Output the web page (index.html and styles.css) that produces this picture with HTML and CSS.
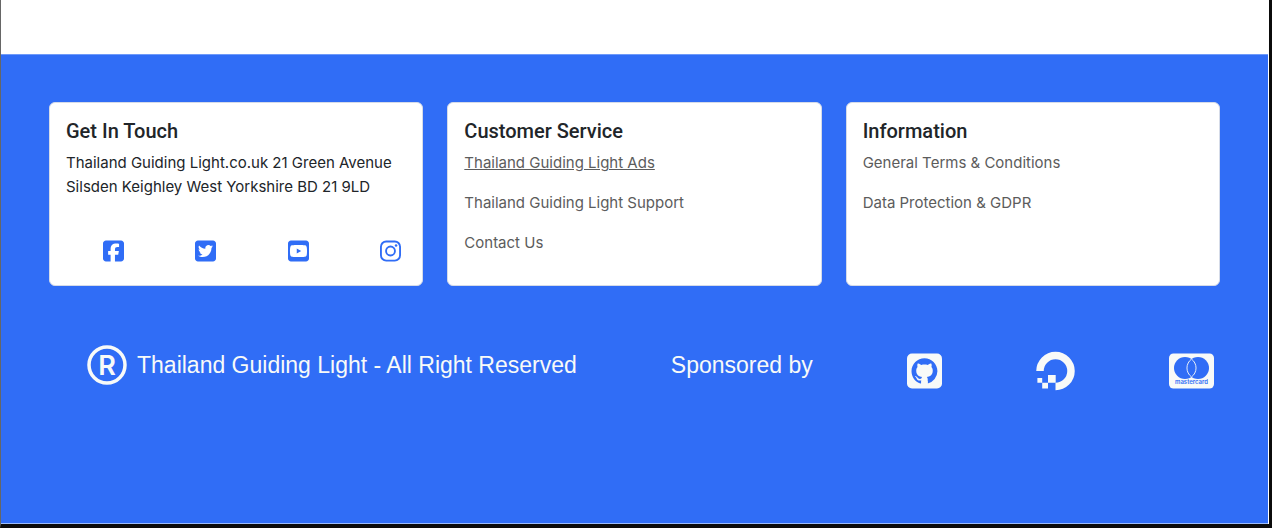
FILE: index.html
```html
<!DOCTYPE html>
<html lang="en">
<head>
<meta charset="utf-8">
<meta name="viewport" content="width=device-width, initial-scale=1">
<title>Thailand Guiding Light</title>
<link rel="stylesheet" href="styles.css">
</head>
<body>
<main class="content"></main>
<footer class="footer">
  <div class="cards">
    <section class="card">
      <h2 class="card-title">Get In Touch</h2>
      <p class="address">Thailand Guiding Light.co.uk 21 Green Avenue Silsden Keighley West Yorkshire BD 21 9LD</p>
      <ul class="social">
        <li><a href="#" aria-label="Facebook"><svg class="icon-sm" viewBox="0 0 448 512"><path d="M64 32C28.700 32 0 60.700 0 96V416c0 35.300 28.700 64 64 64h98.200V334.200H109.400V256h52.800V222.300c0-87.100 39.400-127.500 125-127.500c16.200 0 44.200 3.200 55.700 6.400V172c-6-.6-16.500-1-29.600-1c-42 0-58.200 15.900-58.200 57.200V256h83.600l-14.400 78.200H255V480H384c35.300 0 64-28.700 64-64V96c0-35.300-28.700-64-64-64H64z"/></svg></a></li>
        <li><a href="#" aria-label="Twitter"><svg class="icon-sm" viewBox="0 0 448 512"><path fill-rule="evenodd" d="M64 32C28.700 32 0 60.700 0 96V416c0 35.300 28.700 64 64 64H384c35.300 0 64-28.700 64-64V96c0-35.300-28.700-64-64-64H64zM351.300 199.300c0 86.700-66 186.600-186.600 186.600c-37.200 0-71.700-10.800-100.700-29.400c5.300 .6 10.400 .8 15.800 .8c30.700 0 58.900-10.400 81.400-28c-28.800-.6-53-19.500-61.300-45.500c10.100 1.500 19.200 1.500 29.600-1.200c-30-6.100-52.500-32.500-52.500-64.400v-.8c8.700 4.900 18.900 7.900 29.600 8.300c-9-6-16.400-14.100-21.500-23.600s-7.800-20.200-7.700-31c0-12.200 3.200-23.400 8.900-33.100c32.300 39.800 80.800 65.800 135.200 68.600c-9.300-44.500 24-80.600 64-80.600c18.900 0 35.900 7.900 47.900 20.700c14.800-2.800 29-8.300 41.600-15.800c-4.900 15.200-15.200 28-28.800 36.100c13.200-1.400 26-5.100 37.800-10.200c-8.900 13.100-20.100 24.700-32.900 34c.2 2.800 .2 5.700 .2 8.500z"/></svg></a></li>
        <li><a href="#" aria-label="YouTube"><svg class="icon-sm" viewBox="0 0 448 512"><path fill-rule="evenodd" d="M282 256.200l-95.200-54.100V310.300L282 256.200zM384 32H64C28.700 32 0 60.700 0 96V416c0 35.300 28.700 64 64 64H384c35.300 0 64-28.700 64-64V96c0-35.300-28.700-64-64-64zm14.400 136.100c7.600 28.600 7.600 88.200 7.600 88.200s0 59.600-7.600 88.100c-4.200 15.800-16.500 27.700-32.200 31.900C337.900 384 224 384 224 384s-113.900 0-142.200-7.600c-15.700-4.200-28-16.100-32.200-31.900C42 315.900 42 256.300 42 256.300s0-59.700 7.600-88.200c4.200-15.800 16.500-28.200 32.200-32.400C110.100 128 224 128 224 128s113.900 0 142.200 7.700c15.700 4.200 28 16.600 32.200 32.400z"/></svg></a></li>
        <li><a href="#" aria-label="Instagram"><svg class="icon-sm" viewBox="0 0 448 512"><rect x="20" y="52" width="408" height="408" rx="112" fill="none" stroke="currentColor" stroke-width="40"/><circle cx="224" cy="256" r="95" fill="none" stroke="currentColor" stroke-width="40"/><circle cx="343" cy="137" r="27"/></svg></a></li>
      </ul>
    </section>
    <section class="card">
      <h2 class="card-title">Customer Service</h2>
      <ul class="links">
        <li><a class="link link-active" href="#">Thailand Guiding Light Ads</a></li>
        <li><a class="link" href="#">Thailand Guiding Light Support</a></li>
        <li><a class="link" href="#">Contact Us</a></li>
      </ul>
    </section>
    <section class="card">
      <h2 class="card-title">Information</h2>
      <ul class="links">
        <li><a class="link" href="#">General Terms &amp; Conditions</a></li>
        <li><a class="link" href="#">Data Protection &amp; GDPR</a></li>
      </ul>
    </section>
  </div>
  <div class="bottom">
    <p class="notice">
      <svg class="registered" viewBox="0 0 40 40" aria-hidden="true"><circle cx="20" cy="20" r="18" fill="none" stroke="currentColor" stroke-width="3.500"/><text class="registered-letter" x="20" y="30" text-anchor="middle">R</text></svg>
      <span>Thailand Guiding Light - All Right Reserved</span>
    </p>
    <p class="notice">Sponsored by</p>
    <a class="sponsor" href="#" aria-label="GitHub"><svg width="35" height="36" viewBox="0 0 35 36"><rect width="35" height="35" y=".5" rx="5"/><path class="cutout" transform="translate(4.500 5.200) scale(1.620)" d="M8 0C3.580 0 0 3.580 0 8c0 3.540 2.290 6.530 5.470 7.590.4.070.55-.17.55-.38 0-.19-.01-.82-.01-1.490-2.010.37-2.530-.49-2.690-.94-.09-.23-.48-.94-.82-1.130-.28-.15-.68-.52-.01-.53.63-.01 1.080.58 1.230.82.72 1.210 1.870.87 2.330.66.07-.52.28-.87.51-1.070-1.780-.2-3.640-.89-3.640-3.950 0-.87.31-1.590.82-2.150-.08-.2-.36-1.020.08-2.120 0 0 .67-.21 2.200.82.64-.18 1.320-.27 2-.27s1.360.09 2 .27c1.530-1.040 2.200-.82 2.200-.82.44 1.100.16 1.920.08 2.120.51.56.82 1.270.82 2.150 0 3.070-1.870 3.750-3.650 3.950.29.25.54.73.54 1.480V15.600A8.010 8.010 0 0016 8c0-4.420-3.580-8-8-8z"/><path d="M14.300 28h6.300v5h-6.300z"/></svg></a>
    <a class="sponsor" href="#" aria-label="DigitalOcean"><svg width="39" height="40" viewBox="0 0 39 40"><path d="M4 20A15.500 15.500 0 1 1 19.500 35.500" fill="none" stroke="currentColor" stroke-width="7.500"/><path d="M12 24h7.700v7.700H12zM6.200 31.700H12v5.800H6.200zM1.400 27h4.800v4.700H1.400z"/></svg></a>
    <a class="sponsor" href="#" aria-label="Mastercard"><svg width="45" height="36" viewBox="0 0 45 36"><rect y=".5" width="45" height="35" rx="4.500"/><g class="cutout"><circle cx="16" cy="15" r="11"/><circle cx="29" cy="15" r="11"/><text class="card-brand" x="22.500" y="31" text-anchor="middle">mastercard</text></g><path d="M22.500 6.100a11 11 0 0 1 0 17.800a11 11 0 0 1 0-17.800z" fill="none" stroke="currentColor" stroke-width=".9"/></svg></a>
  </div>
</footer>
</body>
</html>
```
FILE: styles.css
```css
* { box-sizing: border-box; }

html { background: #0b0b0b; }

body {
  display: flex;
  flex-direction: column;
  min-height: 100vh;
  margin: 0;
  border: solid #0b0b0b;
  border-width: 0 3px 4px 1px;
  border-left-color: #666;
  background: #fff;
  color: #212529;
  font: 15px/24px Inter, "Liberation Sans", sans-serif;
}

ul, p, h2 { margin: 0; padding: 0; }
ul { list-style: none; }
svg { display: block; fill: currentColor; }

.content { height: 54px; }

.footer {
  flex: 1;
  margin-right: 1px;
  padding: 47px 48px;
  border-top: 1px solid #6f9af9;
  border-bottom: 1px solid #9cbcfb;
  background: #306df6;
}

.cards {
  display: grid;
  grid-template-columns: repeat(3, 1fr);
  gap: 24px;
}

.card {
  min-height: 184px;
  padding: 16px;
  border: 1px solid #d5dbe8;
  border-radius: 6px;
  background: #fff;
}

.card-title {
  margin-bottom: 8px;
  font-family: Roboto, "Liberation Sans", sans-serif;
  font-size: 20px;
  font-weight: 500;
  line-height: 24px;
}

.social {
  display: flex;
  justify-content: space-between;
  margin-top: 40px;
  padding: 0 5px 0 37px;
  color: #306df6;
}

.social a { display: block; color: inherit; }
.icon-sm { width: 21px; height: 24px; }

.links {
  display: grid;
  gap: 16px;
}

.link { color: #5c5c5c; text-decoration: none; }
.link-active { text-decoration: underline; }

.bottom {
  display: flex;
  justify-content: space-between;
  align-items: center;
  margin-top: 59px;
  padding: 0 6px 0 38px;
  color: #f8faf8;
}

.notice {
  display: flex;
  align-items: center;
  gap: 10px;
  padding-bottom: 12px;
  font-family: "Liberation Sans", sans-serif;
  font-size: 23px;
  line-height: 38px;
}

.registered { width: 40px; height: 40px; }
.registered-letter { font-family: Inter, sans-serif; font-size: 27px; font-weight: 600; }
.sponsor { color: inherit; }
.cutout { fill: #306df6; }
.card-brand { font-size: 6px; font-weight: 600; }
```
